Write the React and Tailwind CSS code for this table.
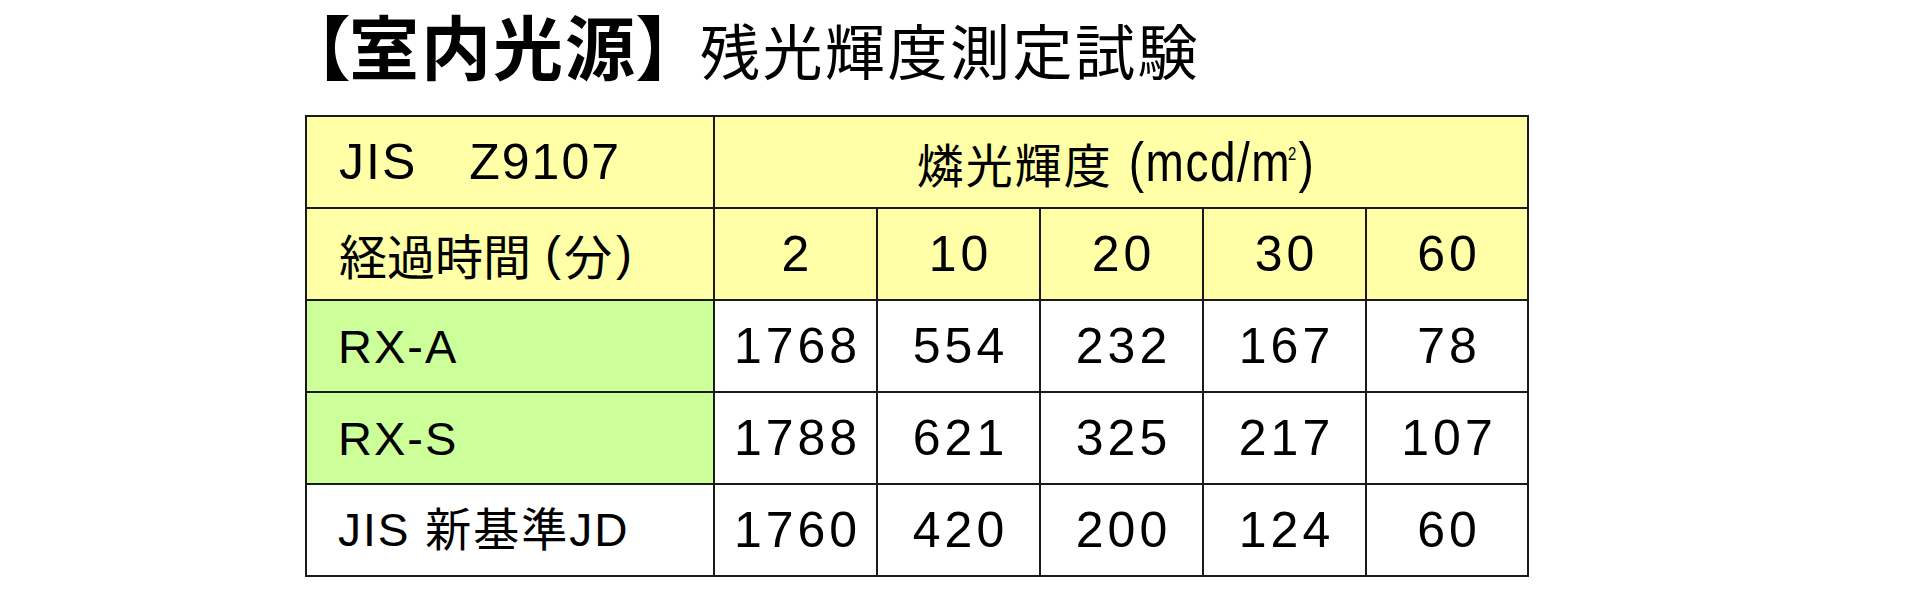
export default function App() {
  const rows = [
    { label: 'RX-A', vals: ['1768', '554', '232', '167', '78'], bg: 'bg-[#ccff99]', size: 'text-[47px] tracking-[2px]' },
    { label: 'RX-S', vals: ['1788', '621', '325', '217', '107'], bg: 'bg-[#ccff99]', size: 'text-[47px] tracking-[2px]' },
    { label: 'JIS 新基準JD', vals: ['1760', '420', '200', '124', '60'], bg: 'bg-white', size: 'text-[46px] tracking-[2px]' },
  ];
  const minutes = ['2', '10', '20', '30', '60'];
  const yellow = 'bg-[#ffffa8]';
  const num = 'flex items-center justify-center pl-[4px] text-[50px] leading-none tracking-[4px]';

  return (
    <div className="min-h-[590px] w-[1921px] bg-white text-black font-['Liberation_Sans','Noto_Sans_CJK_JP',sans-serif]">
      <div className="flex h-[115px] items-baseline pl-[314px] pt-[8px]">
        <h1 className="flex items-baseline text-[70px] font-bold leading-[1.25]">
          <span className="[font-feature-settings:'palt']">【</span>
          <span className="tracking-[2px]">室内光源</span>
          <span className="[font-feature-settings:'palt']">】</span>
        </h1>
        <span className="ml-[28px] text-[60px] leading-[1.25] tracking-[2.5px]">残光輝度測定試験</span>
      </div>

      <div className="ml-[305px] grid w-fit grid-cols-[406px_161px_161px_161px_161px_160px] auto-rows-[90px] gap-[2px] border-2 border-[#1a1a1a] bg-[#1a1a1a]">
        <div className={`${yellow} flex items-center pl-[32px] text-[50px] leading-none tracking-[2px]`}>
          JIS　Z9107
        </div>
        <div className={`${yellow} col-span-5 flex items-center justify-center pr-[10px] leading-none`}>
          <span className="font-['Noto_Sans_CJK_JP',sans-serif] text-[47px] tracking-[2px]">燐光輝度</span>
          <span className="ml-[16px] inline-block origin-center scale-y-[1.2] text-[46px] tracking-[1.5px]">
            (mcd/m<span className="ml-[-3px] mr-[2px] align-[18px] text-[15px] tracking-normal">2</span>)
          </span>
        </div>

        <div className={`${yellow} flex items-center pl-[32px] text-[48px] leading-none`}>
          <span className="font-['Noto_Sans_CJK_JP',sans-serif]">経過時間</span>
          <span className="ml-[14px]">(</span>
          <span className="ml-[3px] font-['Noto_Sans_CJK_JP',sans-serif]">分</span>
          <span className="ml-[4px]">)</span>
        </div>
        {minutes.map((m) => (
          <div key={m} className={`${yellow} ${num}`}>
            {m}
          </div>
        ))}

        {rows.map((r) => (
          <div key={r.label} className="contents">
            <div className={`${r.bg} flex items-center pl-[31px] leading-none ${r.size}`}>{r.label}</div>
            {r.vals.map((v, i) => (
              <div key={i} className={`bg-white ${num}`}>
                {v}
              </div>
            ))}
          </div>
        ))}
      </div>
    </div>
  );
}
